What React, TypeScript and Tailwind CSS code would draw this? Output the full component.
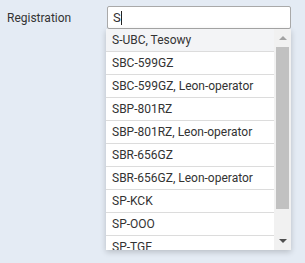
const items = [
  "S-UBC, Tesowy",
  "SBC-599GZ",
  "SBC-599GZ, Leon-operator",
  "SBP-801RZ",
  "SBP-801RZ, Leon-operator",
  "SBR-656GZ",
  "SBR-656GZ, Leon-operator",
  "SP-KCK",
  "SP-OOO",
  "SP-TGE",
];

export default function App() {
  return (
    <div className="w-[305px] h-[263px] bg-[#e4ebf4] font-['Roboto',sans-serif] text-[12px] text-[#333] overflow-hidden">
      <div className="flex pt-[6px]">
        <div className="w-[107px] pl-[7px] pt-[5px] leading-[14px]">Registration</div>
        <div className="w-[184px]">
          <div className="h-[23px] bg-white border border-[#a9a9a9] rounded-[2px] flex items-center pl-[5px] text-[13px]">
            S<span className="w-px h-[14px] bg-[#222]" />
          </div>
          <div className="-ml-px h-[221px] bg-white flex shadow-[0_2px_6px_rgba(0,0,0,0.2)] overflow-hidden">
            <div className="flex-1">
              {items.map((t, i) => (
                <div
                  key={t}
                  className={`h-[23px] border-b border-[#dcdcdc] pl-[6px] flex items-center leading-none ${i === 0 ? "bg-[#f3f4f6]" : "bg-white"}`}
                >
                  {t}
                </div>
              ))}
            </div>
            <div className="w-[17px] bg-[#f1f1f1] flex flex-col items-center">
              <div className="h-[18px] flex items-center justify-center">
                <svg width="8" height="4" viewBox="0 0 8 4"><path d="M0 4 L4 0 L8 4 Z" fill="#a3a3a3" /></svg>
              </div>
              <div className="w-[13px] h-[162px] bg-[#c1c1c1]" />
              <div className="flex-1" />
              <div className="h-[18px] flex items-center justify-center">
                <svg width="8" height="4" viewBox="0 0 8 4"><path d="M0 0 L8 0 L4 4 Z" fill="#505050" /></svg>
              </div>
            </div>
          </div>
        </div>
      </div>
    </div>
  );
}
